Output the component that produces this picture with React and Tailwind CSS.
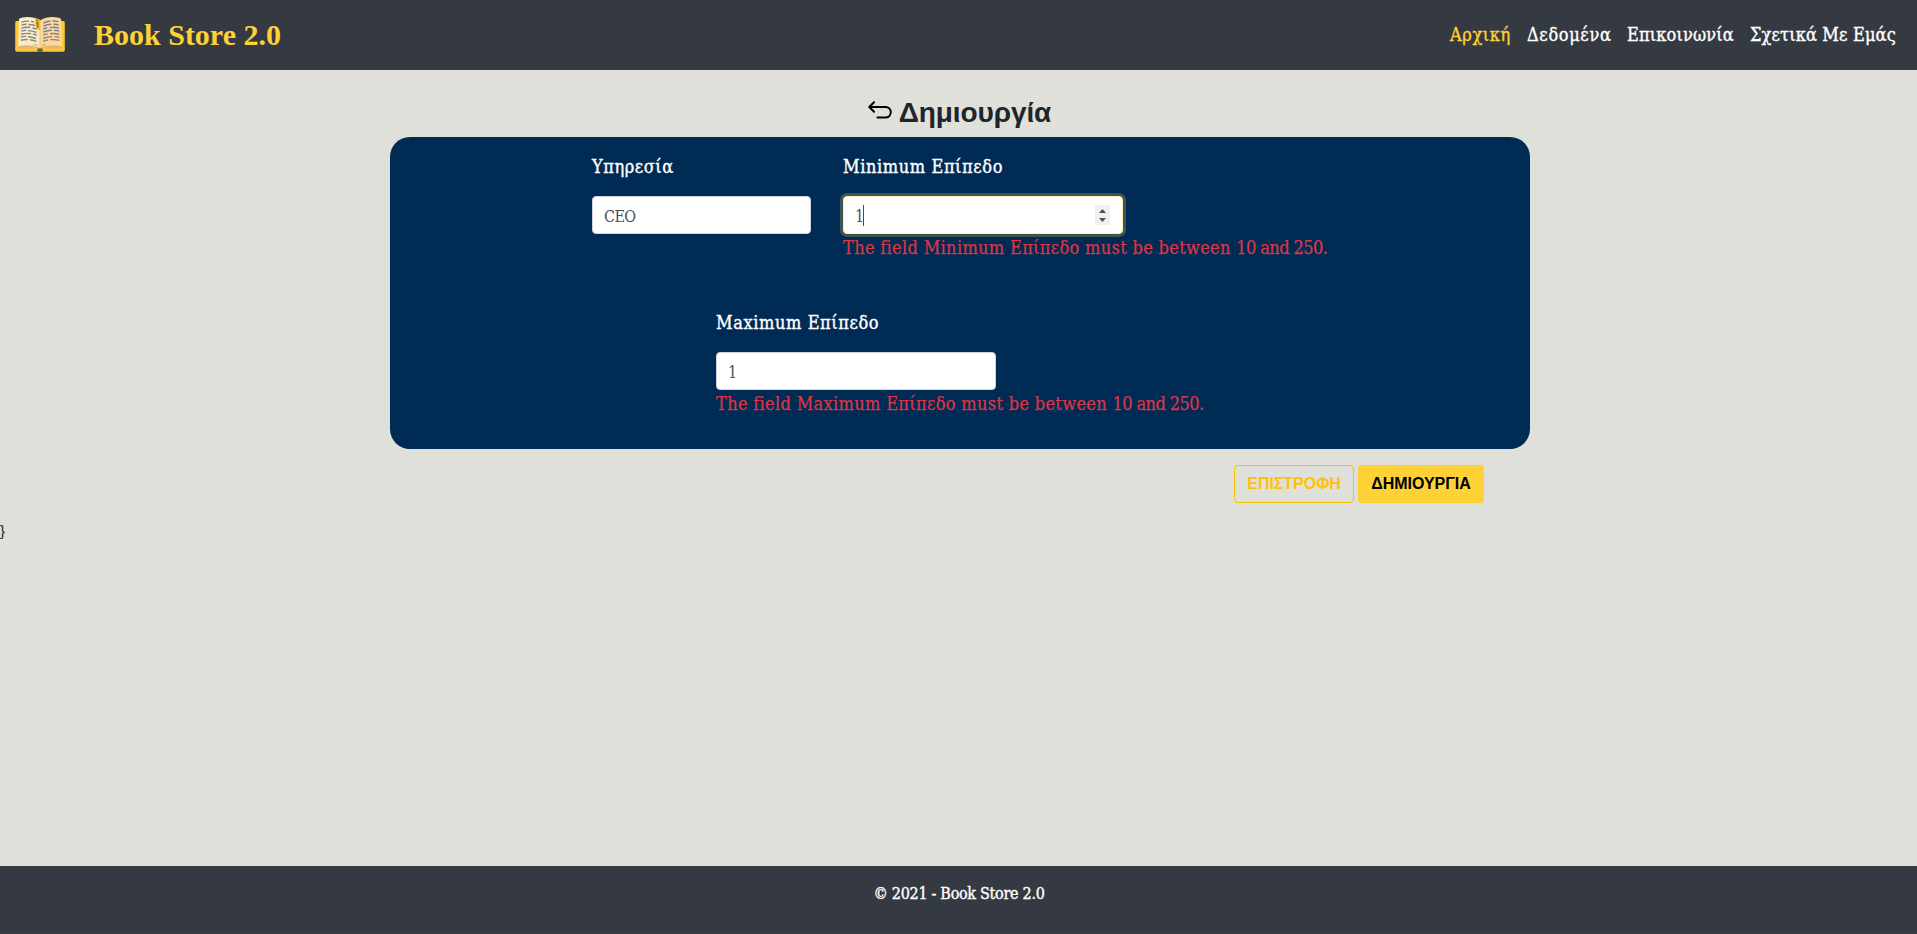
const slab = "font-['DejaVu_Serif_Condensed','DejaVu_Serif',serif]";
const medium = "[-webkit-text-stroke:0.35px_currentColor]";

function BookIcon() {
  return (
    <svg width="50" height="37" viewBox="0 0 50 37" className="-mt-[2px] block">
      <path d="M1.500 5h47a1.500 1.500 0 0 1 1.300 1.500V34a1.800 1.800 0 0 1-1.800 1.800H2A1.800 1.800 0 0 1 .2 34V6.500A1.500 1.500 0 0 1 1.500 5z" fill="#fdc92f" />
      <path d="M3.200 29.500h43.800v3H27.500l-2.500 1-2.500-1H3.200z" fill="#dfb878" />
      <path d="M4 3C8 .2 19 .2 25 4.500V32C19 29 10 28.500 3 30.500z" fill="#fdebc0" />
      <path d="M46 3C42 .2 31 .2 25 4.500V32c6-3 15-3.500 22-1.500z" fill="#fed999" />
      <path d="M25 5v27" stroke="#e8bd7c" strokeWidth="1" />
      <rect x="22.500" y="32.500" width="5" height="3.300" fill="#6d5a32" />
      <path d="M20 1.800l4.800 1.700v11l-1.600-1.500-1.700 1-.7-4.500z" fill="#e8b41c" />
      <path d="M21 4l2 1M20.800 7l2.700 1M21.500 10l2 .8M22.500 5.500v6" stroke="#8a6d1c" strokeWidth=".9" />
      <path
        d="M6.500 6.200q4-1.400 7.500-1M16 5.400l3 .6M6.500 9.200q3-1 5-1M13.500 8.500q3 0 6.500 1M6.300 12.200q5-1.400 9-.7M17.500 12l4 1M6.200 15.200q3-1 5-.8M13 14.600q4 .2 8.500 1.800M6 18.200q5-1.300 10-.5M18 18l4 1.200M5.800 21.200q3-1 5.500-.8M13 20.800q4 .2 8 1.700M5.800 24.200q4-1 7-.7M15 23.800q4 .5 6.500 1.600"
        fill="none" stroke="#84879a" strokeWidth="1.400"
      />
      <path
        d="M28.500 7q3.500-1.700 7-2M37.500 5q3-.2 6 .8M28.300 10q4-1.600 8-1.700M38.500 8.300q3 0 5.500.8M28.300 13q2-1 4-1.300M34.500 11.600q5-.8 9.500.6M28.200 16q4-1.500 8.500-1.700M39 14.300q3 .1 5.200.9M28.200 19.200q2-1 4.500-1.300M35 17.700q5-.5 9.300.6M28.200 22.300q4-1.600 9-1.700M39.500 20.600q3 .1 5 .8M28.200 25.300q2.500-1.200 5-1.400M35.500 23.700q5-.4 9 .7"
        fill="none" stroke="#84808f" strokeWidth="1.400"
      />
      <path d="M18 28.500l5 .8M27 29.300l4-.8" stroke="#b79a62" strokeWidth=".8" />
    </svg>
  );
}

function ReturnIcon() {
  return (
    <svg width="25" height="18" viewBox="0 0 25 18" fill="none" stroke="#000" strokeWidth="2" strokeLinecap="round" strokeLinejoin="round">
      <path d="M6 1.300L1.300 6 6 10.700M1.800 6h16.400a5.300 5.300 0 0 1 0 10.500H9.500" />
    </svg>
  );
}

function Label({ children, tracking }) {
  return <label className={`${slab} ${medium} block h-6 text-[18px] leading-6 text-white whitespace-nowrap ${tracking}`}>{children}</label>;
}

function RangeError({ field }) {
  return (
    <p className={`${slab} mt-[2px] text-[18px] leading-6 tracking-[0.33px] text-[#dc3545] whitespace-nowrap [-webkit-text-stroke:0.25px_currentColor]`}>
      The field {field} must be between <span className="tracking-[-0.58px]">10 and 250.</span>
    </p>
  );
}

function Spinner() {
  return (
    <span className="flex h-5 w-[15px] flex-col items-center justify-center gap-[5px] bg-[#f0f0f0]">
      <svg width="7" height="4" viewBox="0 0 7 4"><path d="M0 4L3.500 0 7 4z" fill="#505050" /></svg>
      <svg width="7" height="4" viewBox="0 0 7 4"><path d="M0 0l3.500 4L7 0z" fill="#505050" /></svg>
    </span>
  );
}

function Field({ children, focused = false, width }) {
  return (
    <div
      className={`${slab} mt-[17px] flex h-[38px] items-center justify-between rounded border bg-white pr-3 pl-[11px] text-[16px] leading-6 text-[#495057] ${width} ${
        focused ? "border-[#ffeeb5] shadow-[0_0_0_3px_rgba(254,209,54,0.25)]" : "border-[#ced4da]"
      }`}
    >
      <div className="flex items-center">
        <span className="pt-[3px] tracking-[-0.6px]">{children}</span>
        {focused && <span className="-ml-px h-[21px] w-px bg-[#495057]" />}
      </div>
      {focused && <Spinner />}
    </div>
  );
}

export default function App() {
  return (
    <div className="flex h-[934px] flex-col overflow-hidden bg-[#dfe0da]">
      <header className="flex h-[70px] shrink-0 items-center bg-[#353a42] pr-[20px] pl-[15px]">
        <BookIcon />
        <span className="ml-[29px] pb-[1px] font-['Liberation_Serif',serif] text-[30px] leading-9 font-bold whitespace-nowrap text-[#fed136]">
          Book Store 2.0
        </span>
        <nav className={`${slab} ${medium} ml-auto flex text-[18px] leading-6 whitespace-nowrap text-white`}>
          <a className="w-[77px] tracking-[0.6px] text-[#fed136]">Αρχική</a>
          <a className="w-[100px] tracking-[0.65px]">Δεδομένα</a>
          <a className="w-[123px] tracking-[0.16px]">Επικοινωνία</a>
          <a className="w-[147px] tracking-[0.15px]">Σχετικά Με Εμάς</a>
        </nav>
      </header>

      <main className="flex grow flex-col">
        <div className="ml-[390px] w-[1140px]">
          <h1 className="mt-[25px] mb-2 flex h-[34px] justify-center gap-[7px] font-['Liberation_Sans',sans-serif] text-[28px] leading-[34px] font-bold text-[#212529]">
            <span className="pt-[6px]"><ReturnIcon /></span>
            <span className="-ml-px pt-px pr-px tracking-[-0.1px]">Δημιουργία</span>
          </h1>
          <section className="h-[312px] rounded-[20px] bg-[#002b54]">
            <div className="flex h-[156px] gap-8 pt-[18px] pl-[202px]">
              <div className="w-[219px]">
                <Label tracking="tracking-[0.55px]">Υπηρεσία</Label>
                <Field width="w-[219px]">CEO</Field>
              </div>
              <div>
                <Label tracking="tracking-[0.6px]">Minimum Επίπεδο</Label>
                <Field width="w-[280px]" focused>1</Field>
                <RangeError field="Minimum Επίπεδο" />
              </div>
            </div>
            <div className="h-[156px] pt-[18px] pl-[326px]">
              <Label tracking="tracking-[0.6px]">Maximum Επίπεδο</Label>
              <Field width="w-[280px]">1</Field>
              <RangeError field="Maximum Επίπεδο" />
            </div>
          </section>
          <div className="mt-4 flex justify-end gap-1 pr-[46px] font-['Liberation_Sans',sans-serif] text-[16px] leading-6 font-bold whitespace-nowrap">
            <button className="flex h-[38px] w-[120px] items-center justify-center rounded border border-[#ffc107] tracking-[-0.04px] text-[#ffc107]">ΕΠΙΣΤΡΟΦΗ</button>
            <button className="flex h-[38px] w-[126px] items-center justify-center rounded bg-[#fed136] tracking-[-0.05px] text-black">ΔΗΜΙΟΥΡΓΙΑ</button>
          </div>
        </div>
        <p className="mt-4 font-['Liberation_Sans',sans-serif] text-[15px] leading-6 text-[#212529]">{"}"}</p>
      </main>

      <footer className={`${slab} ${medium} h-[68px] shrink-0 border-b border-[#3b3b3b] bg-[#353a42] pt-4 pl-px text-center text-[16px] leading-6 tracking-[-0.3px] text-white`}>
        © 2021 - Book Store 2.0
      </footer>
    </div>
  );
}
